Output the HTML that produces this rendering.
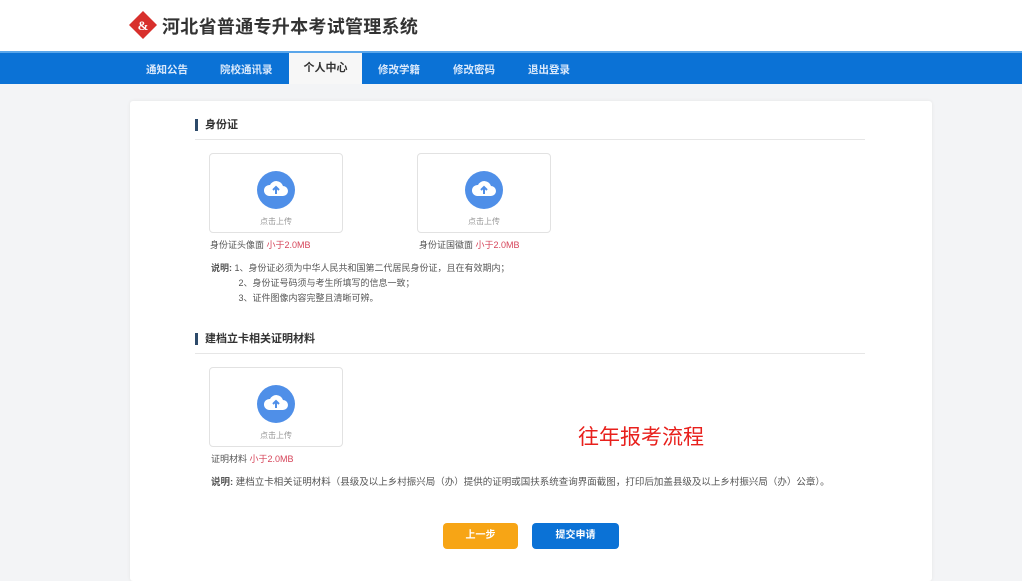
<!DOCTYPE html>
<html><head><meta charset="utf-8"><style>
*{margin:0;padding:0;box-sizing:border-box}
body{width:1022px;height:575px;overflow:hidden;background:#f3f4f6;font-family:"Liberation Sans","Noto Sans CJK SC",sans-serif;position:relative}
.abs{position:absolute}
.top{left:0;top:0;width:1022px;height:51px;background:#fff}
.title{left:162px;top:13px;font-size:18px;font-weight:bold;color:#333;letter-spacing:0.3px}
.nav{left:0;top:51px;width:1022px;height:33px;background:#0b72d6;border-top:2px solid #5aa6ea}
.nav span{position:absolute;top:9px;font-size:10.5px;color:#dbe9fb;font-weight:bold}
.act{left:289px;top:53px;width:73px;height:31px;background:#f7f7f7;color:#333;font-size:11px;text-align:center;line-height:31px;font-weight:bold}
.card{left:130px;top:101px;width:802px;height:480px;background:#fff;border-radius:3px;box-shadow:0 0 3px #e4e4e4}
.h{font-size:11px;font-weight:bold;color:#333;border-left:3px solid #2d4a6a;padding-left:7px;line-height:12px}
.line{height:1px;background:#e6e6e6;width:670px}
.box{width:134px;height:80px;border:1px solid #e2e2e2;border-radius:4px;background:#fff}
.cir{position:absolute;left:47px;top:17px;width:38px;height:38px;border-radius:50%;background:#4f8fe8}
.box .t{position:absolute;top:62px;width:100%;text-align:center;font-size:8px;color:#999}
.lab{font-size:9px;color:#555}
.lab b{color:#d6455a;font-weight:normal}
.note{font-size:9px;color:#555;line-height:15px}
.btn{height:26px;border-radius:4px;color:#fff;font-size:10px;font-weight:bold;text-align:center;line-height:26px}
</style></head><body>
<div class="abs top"></div>
<svg class="abs" style="left:128px;top:10px" width="30" height="30" viewBox="0 0 30 30"><polygon points="15,1 29,15 15,29 1,15" fill="#d8302c"/><text x="15" y="20" font-size="13" text-anchor="middle" fill="#fff" font-weight="bold" font-family="Liberation Serif,serif">&amp;</text></svg>
<div class="abs title">河北省普通专升本考试管理系统</div>
<div class="abs nav">
<span style="left:146px">通知公告</span><span style="left:220px">院校通讯录</span><span style="left:378px">修改学籍</span><span style="left:453px">修改密码</span><span style="left:528px">退出登录</span>
</div>
<div class="abs act">个人中心</div>
<div class="abs card"></div>
<div class="abs h" style="left:195px;top:119px">身份证</div>
<div class="abs line" style="left:195px;top:139px"></div>
<div class="abs box" style="left:209px;top:153px"><div class="cir"><svg width="38" height="38" viewBox="0 0 38 38"><path d="M12 25h14a5 5 0 0 0 0-10 7 7 0 0 0-13-1 5 5 0 0 0-1 11z" fill="#fff"/><path d="M19 23v-7M16 19l3-3 3 3" stroke="#4f8fe8" stroke-width="2" fill="none"/></svg></div><div class="t">点击上传</div></div>
<div class="abs box" style="left:417px;top:153px"><div class="cir"><svg width="38" height="38" viewBox="0 0 38 38"><path d="M12 25h14a5 5 0 0 0 0-10 7 7 0 0 0-13-1 5 5 0 0 0-1 11z" fill="#fff"/><path d="M19 23v-7M16 19l3-3 3 3" stroke="#4f8fe8" stroke-width="2" fill="none"/></svg></div><div class="t">点击上传</div></div>
<div class="abs lab" style="left:210px;top:238px">身份证头像面 <b>小于2.0MB</b></div>
<div class="abs lab" style="left:419px;top:238px">身份证国徽面 <b>小于2.0MB</b></div>
<div class="abs note" style="left:211px;top:261px"><b>说明:</b> 1、身份证必须为中华人民共和国第二代居民身份证，且在有效期内；<br>&nbsp;&nbsp;&nbsp;&nbsp;&nbsp;&nbsp;&nbsp;&nbsp;&nbsp;&nbsp;&nbsp;2、身份证号码须与考生所填写的信息一致；<br>&nbsp;&nbsp;&nbsp;&nbsp;&nbsp;&nbsp;&nbsp;&nbsp;&nbsp;&nbsp;&nbsp;3、证件图像内容完整且清晰可辨。</div>
<div class="abs h" style="left:195px;top:333px">建档立卡相关证明材料</div>
<div class="abs line" style="left:195px;top:353px"></div>
<div class="abs box" style="left:209px;top:367px"><div class="cir"><svg width="38" height="38" viewBox="0 0 38 38"><path d="M12 25h14a5 5 0 0 0 0-10 7 7 0 0 0-13-1 5 5 0 0 0-1 11z" fill="#fff"/><path d="M19 23v-7M16 19l3-3 3 3" stroke="#4f8fe8" stroke-width="2" fill="none"/></svg></div><div class="t">点击上传</div></div>
<div class="abs lab" style="left:211px;top:452px">证明材料 <b>小于2.0MB</b></div>
<div class="abs note" style="left:211px;top:475px;font-size:9.5px"><b>说明:</b> 建档立卡相关证明材料（县级及以上乡村振兴局（办）提供的证明或国扶系统查询界面截图，打印后加盖县级及以上乡村振兴局（办）公章）。</div>
<div class="abs" style="left:578px;top:421px;font-size:21px;color:#e8201c">往年报考流程</div>
<div class="abs btn" style="left:443px;top:523px;width:75px;background:#f7a515">上一步</div>
<div class="abs btn" style="left:532px;top:523px;width:87px;background:#0b72d6">提交申请</div>
</body></html>
